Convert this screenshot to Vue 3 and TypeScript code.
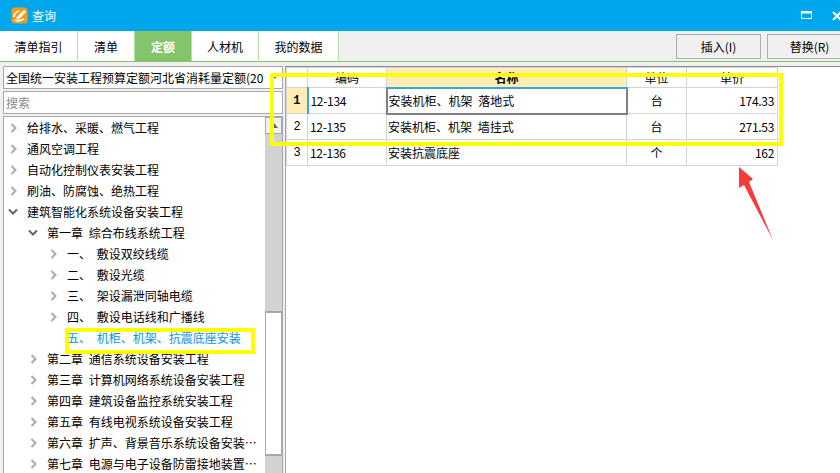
<template>
  <div class="window">
    <div class="title-bar">
      <svg class="logo" width="17" height="17" viewBox="0 0 17 17">
        <rect x="0.5" y="0.5" width="16" height="16" rx="3.5" fill="#f59a1b" />
        <path d="M3 10c0-3 2-5 5-6M4 13c2 1.500 5 1 9-1" fill="none" stroke="#fff" stroke-width="1.800" />
        <path d="M5 11l8-8 2 2-8 8z" fill="#fff" />
      </svg>
      <span class="title-text">查询</span>
      <svg class="win-btn" width="12" height="9" viewBox="0 0 12 9">
        <rect x="0.5" y="0.5" width="10" height="7" fill="none" stroke="#fff" />
        <rect x="0" y="0" width="11" height="2.500" fill="#fff" />
      </svg>
      <svg class="win-btn close" width="10" height="10" viewBox="0 0 10 10">
        <path d="M1 1l8 8M9 1l-8 8" stroke="#fff" stroke-width="2" />
      </svg>
    </div>

    <div class="tab-bar">
      <div
        v-for="tab in tabs"
        :key="tab.label"
        class="tab"
        :class="{ active: tab.active }"
        :style="{ width: tab.width + 'px' }"
      >
        {{ tab.label }}
      </div>
      <div class="tab-actions">
        <button class="action-btn">插入(I)</button>
        <button class="action-btn">替换(R)</button>
      </div>
    </div>

    <div class="content">
      <div class="left-pane">
        <div class="select-box">
          <span class="select-text">全国统一安装工程预算定额河北省消耗量定额(20</span>
          <span class="select-arrow"></span>
        </div>
        <div class="search-box">搜索</div>
        <div class="tree-box">
          <div class="tree-list">
            <div
              v-for="node in tree"
              :key="node.label"
              class="tree-row"
              :class="[`level-${node.level}`, { selected: node.selected }]"
            >
              <svg v-if="node.icon" class="chevron" width="8" height="10" viewBox="0 0 8 10">
                <path v-if="node.icon === 'right'" d="M1.500 1l4 4-4 4" fill="none" stroke="#aaa" stroke-width="2" />
                <path v-else d="M-1 2.500l4 4 4-4" fill="none" stroke="#666" stroke-width="2" />
              </svg>
              <span class="tree-label">{{ node.label }}</span>
            </div>
          </div>
          <div class="scrollbar">
            <div class="scroll-up"><span class="up-arrow"></span></div>
            <div class="scroll-track-top"></div>
            <div class="scroll-thumb"></div>
            <div class="scroll-track-bottom"></div>
          </div>
        </div>
      </div>

      <div class="right-pane">
        <table class="grid">
          <thead>
            <tr>
              <th class="col-index"></th>
              <th class="col-code">编码</th>
              <th class="col-name current">名称</th>
              <th class="col-unit">单位</th>
              <th class="col-price">单价</th>
            </tr>
          </thead>
          <tbody>
            <tr v-for="(row, i) in rows" :key="row.code">
              <td class="col-index index-cell" :class="{ 'row-current': i === 0 }">{{ i + 1 }}</td>
              <td class="col-code code-cell" :class="{ 'code-current': i === 0 }">{{ row.code }}</td>
              <td class="col-name name-cell" :class="{ 'cell-focus': i === 0 }">{{ row.name }}</td>
              <td class="col-unit unit-cell">{{ row.unit }}</td>
              <td class="col-price price-cell">{{ row.price }}</td>
            </tr>
          </tbody>
        </table>
      </div>
    </div>

    <!-- 标注 -->
    <div class="mark mark-table"></div>
    <div class="mark mark-tree"></div>
    <svg class="red-arrow" width="36" height="75" viewBox="0 0 36 75">
      <path d="M0 0L14 12 10 15 34 73 5 18 0 21z" fill="#f73b3b" />
    </svg>
  </div>
</template>

<script setup lang="ts">
interface TreeNode {
  label: string
  level: number
  icon?: 'right' | 'down'
  selected?: boolean
}

const tabs = [
  { label: '清单指引', width: 78 },
  { label: '清单', width: 57 },
  { label: '定额', width: 57, active: true },
  { label: '人材机', width: 67 },
  { label: '我的数据', width: 80 },
]

const tree: TreeNode[] = [
  { label: '给排水、采暖、燃气工程', level: 0, icon: 'right' },
  { label: '通风空调工程', level: 0, icon: 'right' },
  { label: '自动化控制仪表安装工程', level: 0, icon: 'right' },
  { label: '刷油、防腐蚀、绝热工程', level: 0, icon: 'right' },
  { label: '建筑智能化系统设备安装工程', level: 0, icon: 'down' },
  { label: '第一章 综合布线系统工程', level: 1, icon: 'down' },
  { label: '一、 敷设双绞线缆', level: 2, icon: 'right' },
  { label: '二、 敷设光缆', level: 2, icon: 'right' },
  { label: '三、 架设漏泄同轴电缆', level: 2, icon: 'right' },
  { label: '四、 敷设电话线和广播线', level: 2, icon: 'right' },
  { label: '五、 机柜、机架、抗震底座安装', level: 2, selected: true },
  { label: '第二章 通信系统设备安装工程', level: 1, icon: 'right' },
  { label: '第三章 计算机网络系统设备安装工程', level: 1, icon: 'right' },
  { label: '第四章 建筑设备监控系统安装工程', level: 1, icon: 'right' },
  { label: '第五章 有线电视系统设备安装工程', level: 1, icon: 'right' },
  { label: '第六章 扩声、背景音乐系统设备安装工程', level: 1, icon: 'right' },
  { label: '第七章 电源与电子设备防雷接地装置安装工程', level: 1, icon: 'right' },
]

const rows = [
  { code: '12-134', name: '安装机柜、机架 落地式', unit: '台', price: '174.33' },
  { code: '12-135', name: '安装机柜、机架 墙挂式', unit: '台', price: '271.53' },
  { code: '12-136', name: '安装抗震底座', unit: '个', price: '162' },
]
</script>

<style>
html,
body {
  margin: 0;
  overflow: hidden;
}
</style>

<style scoped>
.window {
  position: relative;
  width: 840px;
  height: 473px;
  overflow: hidden;
  background: #f0f0f0;
  color: #000;
  font-family: "Noto Sans CJK SC", "Liberation Sans", sans-serif;
  font-size: 12px;
}

.title-bar {
  display: flex;
  align-items: center;
  height: 31px;
  padding-left: 11px;
  background: #00a7ed;
  color: #fff;
}

.title-text {
  margin-left: 4px;
}

.win-btn {
  margin-left: auto;
  margin-right: 15px;
}

.win-btn.close {
  margin-left: 4px;
  margin-right: -2px;
}

.tab-bar {
  display: flex;
  height: 30px;
  border-bottom: 1px solid #84c56c;
}

.tab {
  display: flex;
  align-items: center;
  justify-content: center;
  box-sizing: border-box;
  background: #fff;
  border-right: 1px solid #b6e0a8;
}

.tab.active {
  background: #84c56c;
  color: #fff;
  font-weight: 700;
}

.tab-actions {
  display: flex;
  gap: 6px;
  margin-left: auto;
  margin-right: -12px;
  padding-top: 3px;
}

.action-btn {
  width: 85px;
  height: 25px;
  padding: 0;
  border: 1px solid #adadad;
  background: #f0f0f0;
  color: #000;
  font-family: inherit;
  font-size: 12px;
}

.content {
  display: flex;
  height: 412px;
}

.left-pane {
  display: flex;
  flex-direction: column;
  gap: 2px;
  width: 280px;
  margin-left: 3px;
  padding-top: 4px;
}

.select-box,
.search-box {
  display: flex;
  flex: none;
  align-items: center;
  box-sizing: border-box;
  height: 23px;
  background: #fff;
  border: 1px solid #a8a8a8;
}

.select-box {
  position: relative;
  padding-left: 2px;
}

.select-text {
  width: 258px;
  overflow: hidden;
  white-space: nowrap;
}

.select-arrow {
  position: absolute;
  right: 4px;
  top: 8px;
  border-left: 3px solid transparent;
  border-right: 3px solid transparent;
  border-top: 4px solid #666;
}

.search-box {
  padding-left: 2px;
  color: #8a8a8a;
}

.tree-box {
  display: flex;
  flex: 1;
  min-height: 0;
  background: #fff;
  border-left: 1px solid #a8a8a8;
  border-top: 1px solid #a8a8a8;
  border-right: 1px solid #a8a8a8;
}

.tree-list {
  flex: 1;
  min-width: 0;
}

.tree-row {
  position: relative;
  display: flex;
  align-items: center;
  height: 21px;
  white-space: nowrap;
  word-spacing: 3px;
}

.level-0 {
  padding-left: 23px;
}

.level-1 {
  padding-left: 43px;
}

.level-2 {
  padding-left: 63px;
}

.tree-row.selected {
  color: #0a8fe8;
}

.chevron {
  position: absolute;
  margin-left: -17px;
  overflow: visible;
}

.tree-label {
  display: block;
  width: 210px;
  overflow: hidden;
  text-overflow: ellipsis;
}

.level-2 .tree-label {
  width: 192px;
}

.scrollbar {
  display: flex;
  flex-direction: column;
  flex: none;
  width: 17px;
  background: #d2d2d2;
}

.scroll-up {
  display: flex;
  align-items: center;
  justify-content: center;
  height: 17px;
  background: #f0f0f0;
  border: 1px solid #a8a8a8;
  box-sizing: border-box;
}

.up-arrow {
  border-left: 4px solid transparent;
  border-right: 4px solid transparent;
  border-bottom: 5px solid #606060;
}

.scroll-track-top {
  height: 177px;
}

.scroll-thumb {
  height: 145px;
  box-sizing: border-box;
  background: #fff;
  border: 1px solid #a8a8a8;
  border-top-width: 2px;
  border-bottom-width: 2px;
}

.scroll-track-bottom {
  flex: 1;
}

.right-pane {
  flex: 1;
  margin-top: 4px;
  margin-left: 2px;
  background: #fff;
  border-left: 1px solid #a8a8a8;
  border-top: 1px solid #8a8a8a;
}

.grid {
  border-collapse: collapse;
  table-layout: fixed;
  width: 491px;
}

.grid th,
.grid td {
  box-sizing: border-box;
  padding: 0 3px;
  border: 1px solid #d4d4d4;
  font-weight: 400;
  white-space: nowrap;
  word-spacing: 3px;
  background: #fff;
}

.grid th {
  height: 20px;
  text-align: center;
}

.grid td {
  height: 26px;
}

.col-index {
  width: 21px;
}

.col-code {
  width: 79px;
}

.col-name {
  width: 240px;
}

.col-unit {
  width: 60px;
}

.col-price {
  width: 91px;
}

.grid th.current {
  background: #ffedb8;
  font-weight: 700;
  border-bottom: 2px solid #3aa7d6;
}

.index-cell {
  text-align: center;
  font-family: "Liberation Mono", monospace;
}

.grid td.row-current {
  background: #ffedb8;
  font-weight: 700;
}

.code-cell,
.price-cell {
  letter-spacing: -0.3px;
}

.grid td.code-cell {
  padding-left: 2px;
}

.grid td.code-current {
  border-left: 2px solid #3aa7d6;
}

.grid td.name-cell {
  padding-left: 1px;
}

.grid td.cell-focus {
  border: 2px solid #808080;
  border-top: 2px solid #3aa7d6;
}

.unit-cell {
  text-align: center;
}

.price-cell {
  text-align: right;
}

.mark {
  position: absolute;
  box-sizing: border-box;
  border: 4px solid #ffff00;
  pointer-events: none;
}

.mark-table {
  left: 270px;
  top: 73px;
  width: 513px;
  height: 73px;
}

.mark-tree {
  left: 65px;
  top: 328px;
  width: 190px;
  height: 26px;
}

.red-arrow {
  position: absolute;
  left: 739px;
  top: 167px;
}
</style>
